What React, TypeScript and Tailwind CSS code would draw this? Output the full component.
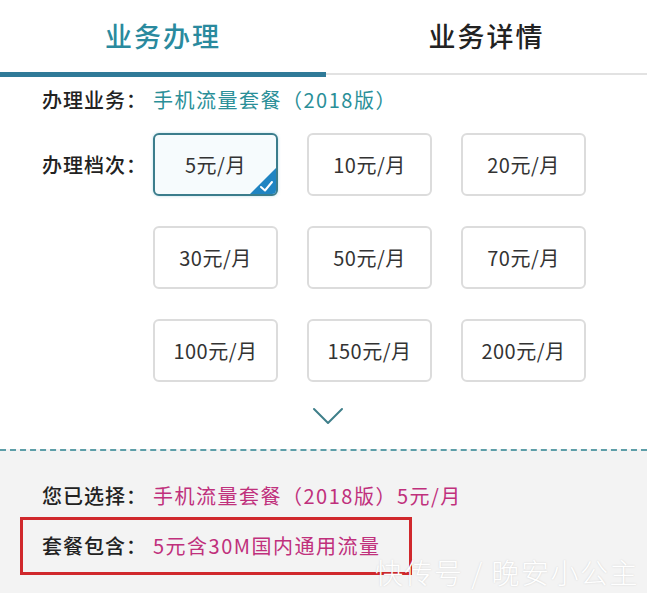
import React from 'react';

const tiers = ['5元/月', '10元/月', '20元/月', '30元/月', '50元/月', '70元/月', '100元/月', '150元/月', '200元/月'];

const TierBox: React.FC<{ label: string; selected?: boolean }> = ({ label, selected }) => {
  if (selected) {
    return (
      <div className="relative h-[63px] rounded-[6px] border-2 border-[#3b7d8c] bg-[#f6fbfd] flex items-center justify-center overflow-hidden shadow-[0_0_3px_rgba(120,190,210,0.5)]">
        <span className="text-[20px] tracking-[0.5px] text-[#333]">{label}</span>
        {/* corner tick */}
        <svg className="absolute right-0 bottom-0" width="26" height="26" viewBox="0 0 26 26">
          <polygon points="26,0 26,26 0,26" fill="#1f84c2" />
          <polyline points="11,19 15,22.5 22,14" fill="none" stroke="#ffffff" strokeWidth="2" strokeLinecap="round" strokeLinejoin="round" />
        </svg>
      </div>
    );
  }
  return (
    <div className="h-[63px] rounded-[6px] border-2 border-[#dcdcdc] bg-white flex items-center justify-center">
      <span className="text-[20px] tracking-[0.5px] text-[#333]">{label}</span>
    </div>
  );
};

export default function App() {
  return (
    <div
      className="relative w-[647px] h-[593px] bg-white overflow-hidden flex flex-col"
      style={{ fontFamily: '"Noto Sans CJK SC", "Noto Sans", sans-serif' }}
    >
      {/* tabs */}
      <div className="flex h-[72px]">
        <div className="w-[326px] flex items-center justify-center text-[27px] font-medium tracking-[2px] text-[#2a8a9e]">
          业务办理
        </div>
        <div className="flex-1 flex items-center justify-center text-[27px] font-medium tracking-[2px] text-[#222]">
          业务详情
        </div>
      </div>
      <div className="flex h-[5px]">
        <div className="w-[326px] bg-[#2f7a98]" />
        <div className="flex-1 flex flex-col">
          <div className="h-[1px]" />
          <div className="h-[2px] bg-[#e2e2e2]" />
        </div>
      </div>

      {/* business */}
      <div className="pl-[42px] h-[46px] flex items-center text-[20px] tracking-[1px]">
        <span className="text-[#222] font-medium">办理业务：</span>
        <span className="ml-[6px] tracking-[1.5px] text-[#2a8f98]">手机流量套餐（2018版）</span>
      </div>

      {/* tiers */}
      <div className="pl-[42px] mt-[10px] flex">
        <div className="w-[111px] h-[63px] flex items-center text-[20px] tracking-[1px] font-medium text-[#222]">办理档次：</div>
        <div className="grid grid-cols-[125px_125px_125px] gap-x-[29px] gap-y-[30px]">
          {tiers.map((t, i) => (
            <TierBox key={t} label={t} selected={i === 0} />
          ))}
        </div>
      </div>

      {/* expand */}
      <div className="h-[67px] flex items-center justify-center pl-[8px]">
        <svg width="32" height="18" viewBox="0 0 32 18">
          <polyline points="2,2 16,16 30,2" fill="none" stroke="#3f7f8a" strokeWidth="2" strokeLinecap="round" strokeLinejoin="round" />
        </svg>
      </div>

      {/* summary */}
      <div className="flex-1 border-t-2 border-dashed border-[#5d9ea8] bg-[#f3f3f3] pt-[30px]">
        <div className="pl-[42px] h-[30px] flex items-center text-[20px] tracking-[1px]">
          <span className="text-[#222] font-medium">您已选择：</span>
          <span className="ml-[6px] tracking-[1.5px] text-[#c0307c]">手机流量套餐（2018版）5元/月</span>
        </div>
        <div className="ml-[20px] mt-[6px] w-[392px] h-[58px] border-[3px] border-[#d0282c] flex items-center pl-[19px] text-[20px] tracking-[1px]">
          <span className="text-[#222] font-medium">套餐包含：</span>
          <span className="ml-[6px] tracking-[1.5px] text-[#c0307c]">5元含30M国内通用流量</span>
        </div>
      </div>

      {/* watermark */}
      <div className="absolute left-[375px] top-[554px] text-[28px] leading-[36px] tracking-[1.5px] font-light text-white [text-shadow:0_0_2px_rgba(0,0,0,0.15)]">
        快传号 / 晚安小公主
      </div>
    </div>
  );
}
